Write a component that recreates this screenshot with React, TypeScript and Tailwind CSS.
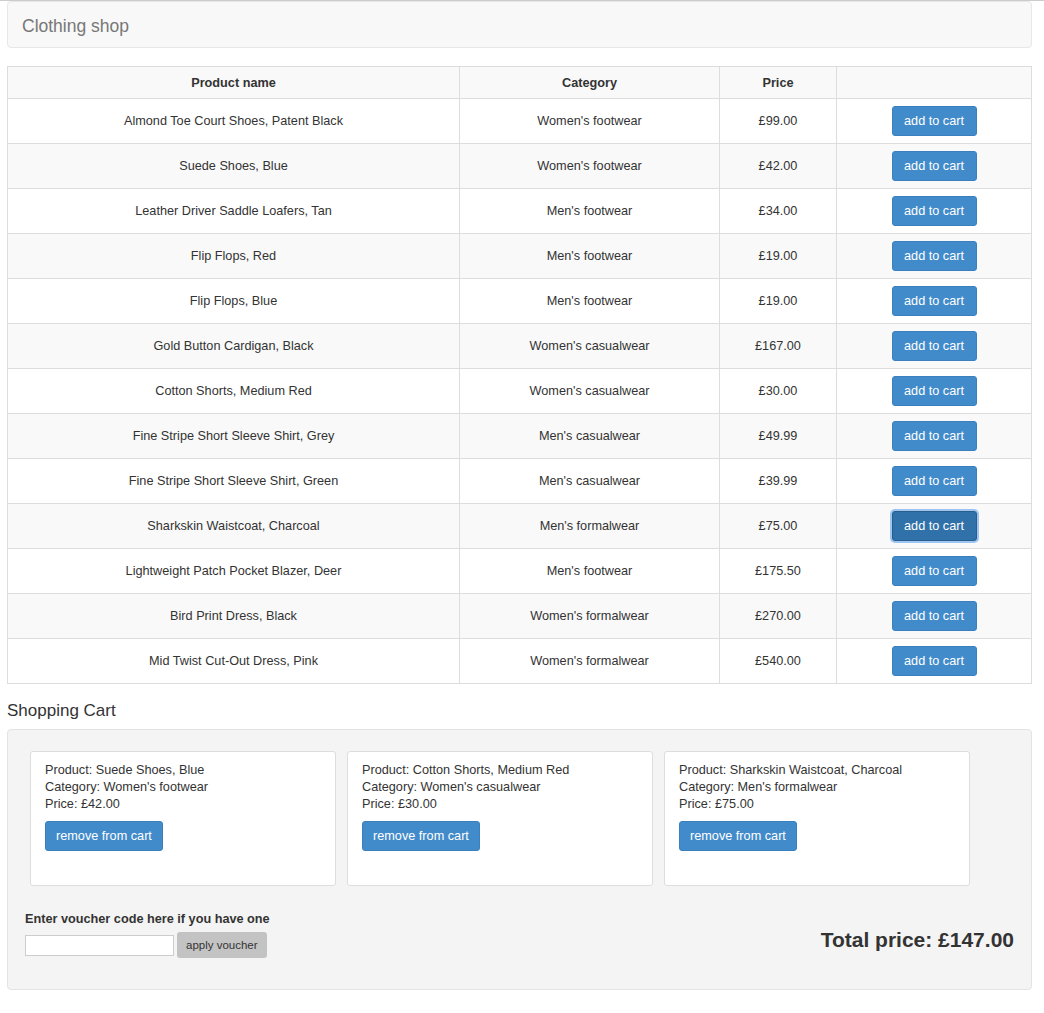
const products = [
  { name: "Almond Toe Court Shoes, Patent Black", category: "Women's footwear", price: "£99.00" },
  { name: "Suede Shoes, Blue", category: "Women's footwear", price: "£42.00" },
  { name: "Leather Driver Saddle Loafers, Tan", category: "Men's footwear", price: "£34.00" },
  { name: "Flip Flops, Red", category: "Men's footwear", price: "£19.00" },
  { name: "Flip Flops, Blue", category: "Men's footwear", price: "£19.00" },
  { name: "Gold Button Cardigan, Black", category: "Women's casualwear", price: "£167.00" },
  { name: "Cotton Shorts, Medium Red", category: "Women's casualwear", price: "£30.00" },
  { name: "Fine Stripe Short Sleeve Shirt, Grey", category: "Men's casualwear", price: "£49.99" },
  { name: "Fine Stripe Short Sleeve Shirt, Green", category: "Men's casualwear", price: "£39.99" },
  { name: "Sharkskin Waistcoat, Charcoal", category: "Men's formalwear", price: "£75.00" },
  { name: "Lightweight Patch Pocket Blazer, Deer", category: "Men's footwear", price: "£175.50" },
  { name: "Bird Print Dress, Black", category: "Women's formalwear", price: "£270.00" },
  { name: "Mid Twist Cut-Out Dress, Pink", category: "Women's formalwear", price: "£540.00" },
];

const cart = [
  { name: "Suede Shoes, Blue", category: "Women's footwear", price: "£42.00" },
  { name: "Cotton Shorts, Medium Red", category: "Women's casualwear", price: "£30.00" },
  { name: "Sharkskin Waistcoat, Charcoal", category: "Men's formalwear", price: "£75.00" },
];

type CartItemProps = {
  name: string;
  category: string;
  price: string;
};

function CartItem({ name, category, price }: CartItemProps) {
  return (
    <div className="h-[135px] w-[306px] rounded-[3px] border border-[#ddd] bg-white px-[14px] pt-[10px]">
      <p className="leading-[17px]">Product: {name}</p>
      <p className="leading-[17px]">Category: {category}</p>
      <p className="leading-[17px]">Price: {price}</p>
      <button className="mt-[8px] h-[30px] rounded-[3px] border border-[#3a80bf] bg-[#428bca] px-[10px] pt-[1px] text-[12.7px] text-white">
        remove from cart
      </button>
    </div>
  );
}

export default function App() {
  return (
    <div className="min-h-[1013px] border-t border-[#ccc] bg-white pr-[12px] pl-[7px] text-[12.7px] text-[#333] [font-family:'Liberation_Sans',Arial,sans-serif]">
      <nav className="flex h-[47px] items-center rounded-[4px] border border-[#e7e7e7] bg-[#f8f8f8] px-[14px] pt-[3px]">
        <span className="text-[17.5px] text-[#777]">Clothing shop</span>
      </nav>

      <table className="mt-[18px] w-full border-collapse border border-[#ddd]">
        <thead>
          <tr className="h-[32px] bg-[#f9f9f9]">
            <th className="w-[452px] border border-[#ddd] pt-[2px] font-bold">Product name</th>
            <th className="w-[260px] border border-[#ddd] pt-[2px] font-bold">Category</th>
            <th className="w-[117px] border border-[#ddd] pt-[2px] font-bold">Price</th>
            <th className="border border-[#ddd]"></th>
          </tr>
        </thead>
        <tbody>
          {products.map((p, i) => (
            <tr key={p.name} className={i % 2 === 1 ? "h-[45px] bg-[#f9f9f9]" : "h-[45px] bg-white"}>
              <td className="border border-[#ddd] pt-[2px] text-center">{p.name}</td>
              <td className="border border-[#ddd] pt-[2px] text-center">{p.category}</td>
              <td className="border border-[#ddd] pt-[2px] text-center">{p.price}</td>
              <td className="border border-[#ddd] text-center">
                {i === 9 ? (
                  <button className="h-[30px] w-[85px] rounded-[3px] border border-[#285e8e] bg-[#3071a9] pt-[1px] text-[12.7px] text-white shadow-[0_0_0_2px_#9ec5f0]">
                    add to cart
                  </button>
                ) : (
                  <button className="h-[30px] w-[85px] rounded-[3px] border border-[#3a80bf] bg-[#428bca] pt-[1px] text-[12.7px] text-white">
                    add to cart
                  </button>
                )}
              </td>
            </tr>
          ))}
        </tbody>
      </table>

      <h2 className="mt-[17px] text-[17px] leading-[20px]">Shopping Cart</h2>

      <div className="mt-[8px] rounded-[4px] border border-[#e3e3e3] bg-[#f4f4f4] px-[17px] pt-[21px] pb-[31px]">
        <div className="flex gap-[11px] pl-[5px]">
          {cart.map((c) => (
            <CartItem key={c.name} {...c} />
          ))}
        </div>

        <div className="mt-[24px] flex items-end justify-between">
          <div>
            <p className="pt-[1px] font-bold leading-[17px]">Enter voucher code here if you have one</p>
            <div className="mt-[4px] flex items-center gap-[3px]">
              <input className="h-[21px] w-[149px] border border-[#ccc] bg-white" />
              <button className="h-[26px] rounded-[3px] bg-[#c3c3c3] px-[9px] pt-[1px] text-[11.5px] text-[#333]">
                apply voucher
              </button>
            </div>
          </div>
          <p className="mb-[5px] text-[21px] font-bold leading-[26px]">Total price: £147.00</p>
        </div>
      </div>
    </div>
  );
}
